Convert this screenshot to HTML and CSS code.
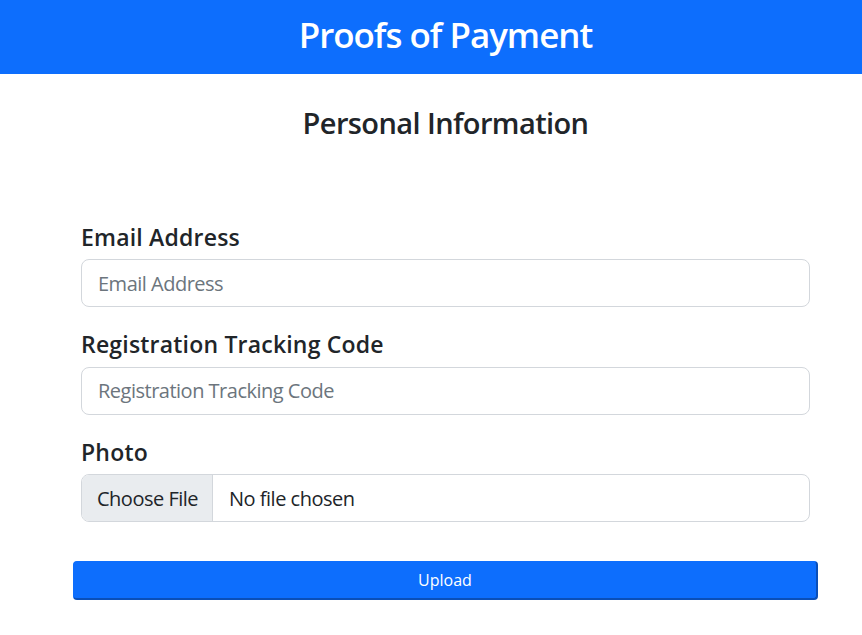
FILE: index.html
```html
<!DOCTYPE html>
<html lang="en">
<head>
<meta charset="utf-8">
<title>Proofs of Payment</title>
<link rel="stylesheet" href="styles.css">
</head>
<body>
<div class="page">
  <header class="topbar">
    <h1 class="topbar-title">Proofs of Payment</h1>
  </header>
  <main class="content">
    <h2 class="section-title">Personal Information</h2>
    <form class="form">
      <div class="field">
        <label class="field-label" for="email">Email Address</label>
        <input class="field-input" id="email" type="email" placeholder="Email Address">
      </div>
      <div class="field">
        <label class="field-label" for="code">Registration Tracking Code</label>
        <input class="field-input" id="code" type="text" placeholder="Registration Tracking Code">
      </div>
      <div class="field">
        <label class="field-label" for="photo">Photo</label>
        <input class="field-input file-input" id="photo" type="file">
      </div>
      <button class="upload-btn" type="button">Upload</button>
    </form>
  </main>
</div>
</body>
</html>
```

FILE: styles.css
```css
html, body {
  margin: 0;
  padding: 0;
  overflow: hidden;
  background: #fff;
}

body {
  font-family: "Open Sans", "Noto Sans", "Liberation Sans", sans-serif;
  color: #212529;
}

.page {
  width: 891px;
}

.topbar {
  background: #0d6efd;
  padding: 14px 0 18px;
  text-align: center;
}

.topbar-title {
  margin: 0;
  color: #fff;
  font-size: 34.9px;
  font-weight: 600;
  line-height: 1.2;
  letter-spacing: -1px;
}

.content {
  padding: 0 81px;
}

.section-title {
  margin: 32px 0 83px;
  text-align: center;
  font-size: 29px;
  font-weight: 600;
  line-height: 1.2;
  letter-spacing: -0.6px;
}

.form {
  display: flex;
  flex-direction: column;
}

.field {
  margin-bottom: 24px;
}

.field-label {
  display: block;
  margin-bottom: 8px;
  font-size: 23px;
  font-weight: 600;
  line-height: 1.2;
  letter-spacing: 0.2px;
}

.field-input {
  display: block;
  box-sizing: border-box;
  width: 100%;
  height: 48px;
  margin: 0;
  padding: 8px 16px;
  font-family: inherit;
  font-size: 20px;
  line-height: 1.5;
  letter-spacing: -0.5px;
  color: #212529;
  background: #fff;
  border: 1px solid #d3d7dc;
  border-radius: 8px;
  outline: none;
}

.field-input::placeholder {
  color: #6c757d;
}

.file-input {
  overflow: hidden;
}

.file-input::file-selector-button {
  margin: -8px 16px -8px -16px;
  padding: 8px 14px 8px 15px;
  height: 46px;
  font-family: inherit;
  font-size: 20px;
  letter-spacing: -0.5px;
  color: #212529;
  background: #e9ecef;
  border: 0;
  border-right: 1px solid #d3d7dc;
  border-radius: 0;
}

.upload-btn {
  margin: 15px -8px 0;
  padding: 6px 12px;
  font-family: inherit;
  font-size: 16px;
  line-height: 1.5;
  color: #fff;
  background: #0d6efd;
  border: 1px solid #0d6efd;
  border-right: 2px solid #0a4fb8;
  border-bottom: 2px solid #0a4fb8;
  border-radius: 4px;
}
```
